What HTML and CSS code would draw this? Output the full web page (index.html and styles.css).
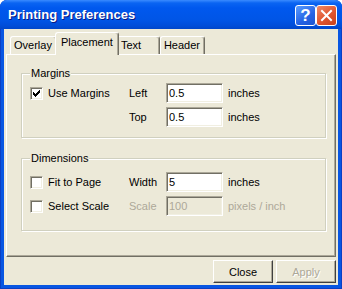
FILE: index.html
```html
<!DOCTYPE html>
<html lang="en">
<head>
    <meta charset="UTF-8">
    <title>Printing Preferences</title>
    <link rel="stylesheet" href="styles.css">
</head>
<body>

    <div class="window">
        <div class="titlebar">
            <div class="title">Printing Preferences</div>
            <div class="caption-buttons">
                <div class="cap-btn cap-help">?</div>
                <div class="cap-btn cap-close">
                    <svg width="19" height="19" viewBox="0 0 19 19">
                        <path d="M5 5L14 14M14 5L5 14" stroke="#fff" stroke-width="2" stroke-linecap="square"/>
                    </svg>
                </div>
            </div>
        </div>

        <div class="client">
            <div class="tabs">
                <div class="tab">Overlay</div>
                <div class="tab active">Placement</div>
                <div class="tab">Text</div>
                <div class="tab">Header</div>
            </div>

            <div class="panel">
                <fieldset class="group group-margins">
                    <legend class="group-title">Margins</legend>
                    <div class="grid">
                        <div class="check">
                            <span class="box">
                                <svg width="7" height="7" viewBox="0 0 7 7" shape-rendering="crispEdges">
                                    <path d="M0 2h1v3H0zM1 3h1v3H1zM2 4h1v3H2zM3 3h1v3H3zM4 2h1v3H4zM5 1h1v3H5zM6 0h1v3H6z" fill="#000"/>
                                </svg>
                            </span>
                            <span>Use Margins</span>
                        </div>
                        <div>Left</div>
                        <input class="field" type="text" value="0.5">
                        <div class="unit">inches</div>

                        <div></div>
                        <div>Top</div>
                        <input class="field" type="text" value="0.5">
                        <div class="unit">inches</div>
                    </div>
                </fieldset>

                <fieldset class="group group-dims">
                    <legend class="group-title">Dimensions</legend>
                    <div class="grid">
                        <div class="check">
                            <span class="box"></span>
                            <span>Fit to Page</span>
                        </div>
                        <div>Width</div>
                        <input class="field" type="text" value="5">
                        <div class="unit">inches</div>

                        <div class="check">
                            <span class="box"></span>
                            <span>Select Scale</span>
                        </div>
                        <div class="is-disabled">Scale</div>
                        <input class="field" type="text" value="100" disabled>
                        <div class="unit is-disabled">pixels / inch</div>
                    </div>
                </fieldset>
            </div>

            <div class="actions">
                <button class="btn">Close</button>
                <button class="btn" disabled>Apply</button>
            </div>
        </div>
    </div>

</body>
</html>
```

FILE: styles.css
```css
/* General Styling */
body {
    margin: 0;
    background: #fff;
    font-family: 'Liberation Sans', Arial, sans-serif;
    font-size: 11px;
    color: #000;
}

.window {
    width: 342px;
    height: 289px;
    display: flex;
    flex-direction: column;
    background: #0856e2;
    border-radius: 7px 7px 0 0;
    box-shadow: inset 0 0 0 1px #0b3fc4;
    overflow: hidden;
}

/* Title bar */
.titlebar {
    flex: none;
    height: 29px;
    display: flex;
    align-items: center;
    padding: 0 5px 0 8px;
    background: linear-gradient(to bottom, #3a8bff 0px, #0a64f2 3px, #0058ee 8px, #0055e6 20px, #004dd8 26px, #0046c9 29px);
}

.title {
    flex: 1;
    color: #fff;
    font-weight: bold;
    font-size: 13px;
    text-shadow: 1px 1px #0a1a83;
}

.caption-buttons {
    display: flex;
    gap: 0;
    margin-top: 2px;
}

.cap-btn {
    width: 21px;
    height: 21px;
    box-sizing: border-box;
    border: 1px solid #fff;
    border-radius: 3px;
    display: flex;
    justify-content: center;
    align-items: center;
    color: #fff;
}

.cap-help {
    background: linear-gradient(145deg, #5a9cff, #2563e4 60%, #1d55d0);
    font-weight: bold;
    font-size: 17px;
    line-height: 19px;
}

.cap-close {
    background: linear-gradient(145deg, #f08a68, #e0552e 55%, #c8411d);
}

/* Client area */
.client {
    flex: 1;
    margin: 0 4px 4px;
    padding: 3px 2px 2px;
    background: #ece9d8;
    display: flex;
    flex-direction: column;
}

.tabs {
    flex: none;
    height: 22px;
    display: flex;
    padding-left: 4px;
    position: relative;
    z-index: 1;
}

.tab {
    box-sizing: border-box;
    height: 18px;
    min-width: 43px;
    margin-top: 4px;
    padding: 0 4px 0 3px;
    border: 1px solid;
    border-color: #fff #716f64 transparent #fff;
    border-bottom: none;
    border-radius: 3px 3px 0 0;
    box-shadow: inset -1px 0 #aca899;
    line-height: 16px;
    background: #ece9d8;
}

.tab.active {
    position: relative;
    z-index: 1;
    height: 23px;
    margin: 0 -2px;
    padding: 1px 5px 0;
}

.panel {
    flex: 1;
    border: 1px solid;
    border-color: #fff #716f64 #716f64 #fff;
    box-shadow: inset -1px -1px #aca899;
    padding: 12px 9px 0 14px;
}

/* Group boxes */
.group {
    margin: 0;
    padding: 3px 8px 10px;
    border: 1px solid #d0d0bf;
    box-shadow: inset 1px 1px #fff, 1px 1px #fff;
}

.group + .group {
    margin-top: 14px;
}

.group-dims {
    padding-top: 7px;
    padding-bottom: 14px;
}

.group-title {
    padding: 0 1px;
    line-height: 13px;
    background: #ece9d8;
}

.grid {
    display: grid;
    grid-template-columns: 99px 37px 57px auto;
    row-gap: 4px;
    align-items: center;
}

.check {
    display: flex;
    align-items: center;
    gap: 5px;
}

.box {
    width: 13px;
    height: 13px;
    box-sizing: border-box;
    border: 1px solid;
    border-color: #aca899 #fff #fff #aca899;
    box-shadow: inset 1px 1px #716f64, inset -1px -1px #f1efe2;
    background: #fff;
    display: flex;
    justify-content: center;
    align-items: center;
}

.field {
    width: 57px;
    height: 20px;
    box-sizing: border-box;
    margin: 0;
    padding: 0 2px;
    border: 1px solid;
    border-color: #aca899 #fff #fff #aca899;
    box-shadow: inset 1px 1px #716f64, inset -1px -1px #f1efe2;
    background: #fff;
    color: #000;
    font: inherit;
    outline: none;
}

.field:disabled {
    background: #ece9d8;
    color: #aca899;
}

.unit {
    padding-left: 5px;
}

.is-disabled {
    color: #aca899;
}

/* Buttons */
.actions {
    flex: none;
    display: flex;
    justify-content: flex-end;
    gap: 3px;
    margin-top: 3px;
}

.btn {
    width: 60px;
    height: 23px;
    padding: 0;
    background: #ece9d8;
    border: 1px solid;
    border-color: #fff #404040 #404040 #fff;
    box-shadow: inset -1px -1px #aca899;
    color: #000;
    font: inherit;
}

.btn:disabled {
    color: #aca899;
    text-shadow: 1px 1px #fff;
}
```
